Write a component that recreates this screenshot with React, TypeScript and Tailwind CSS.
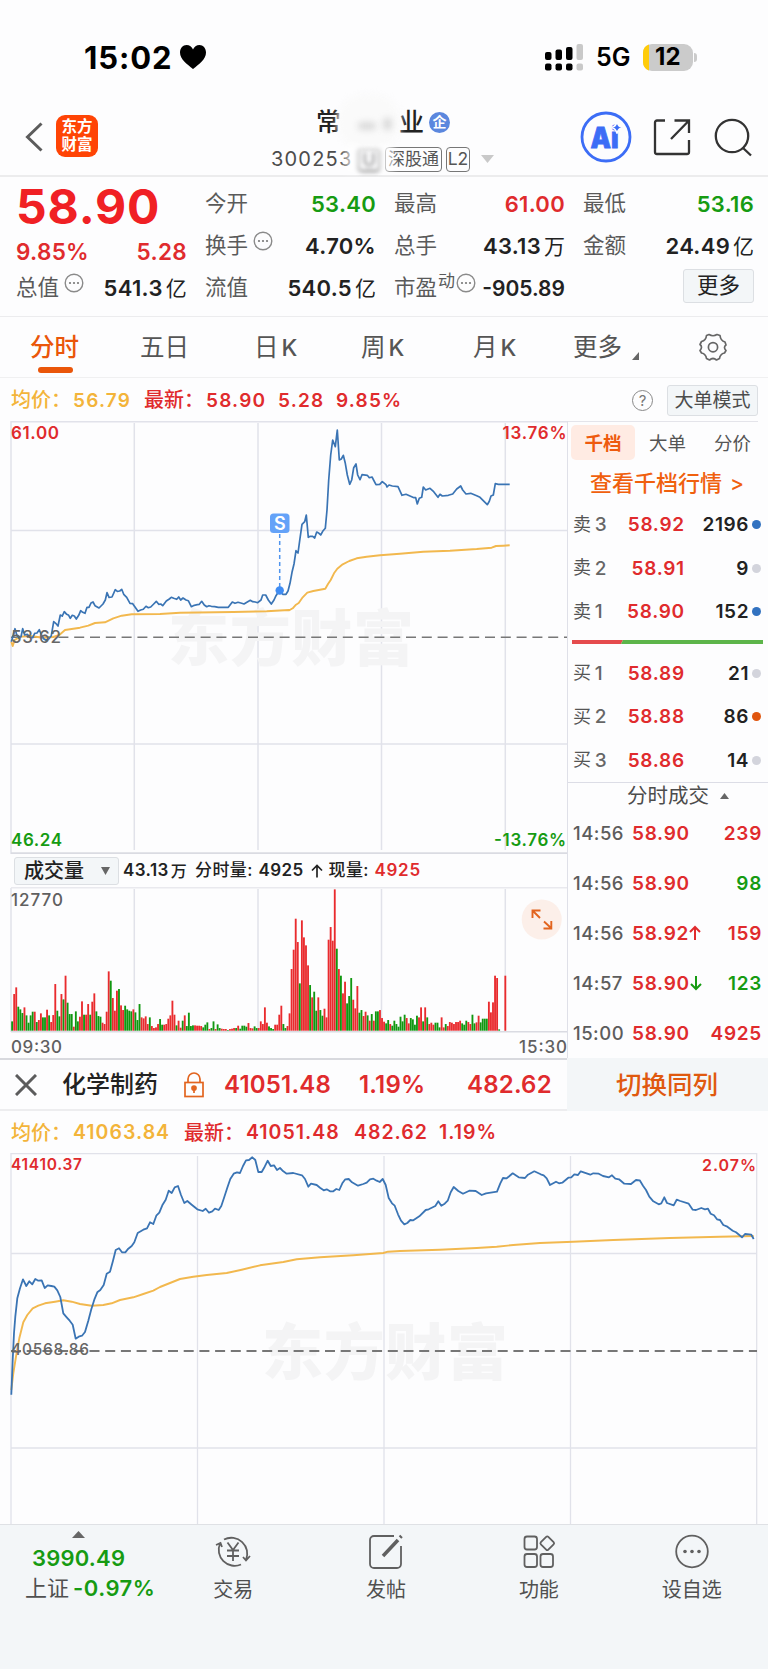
import React from "react";

const RED = "#e02b2d";
const GREEN = "#169b12";

/* ---------- chart data (in thirds of a pixel, relative to an origin) ---------- */
type Seg = { ox: number; oy: number; d: string };

const toPoints = (segs: Seg[]) =>
  segs
    .map(({ ox, oy, d }) =>
      d
        .trim()
        .split(/\s+/)
        .map((p) => {
          const [x, y] = p.split(",").map(Number);
          return `${(ox + x / 3).toFixed(1)},${(oy + y / 3).toFixed(1)}`;
        })
        .join(" ")
    )
    .join(" ");

const stockPrice = toPoints([
  {
    ox: 0,
    oy: 370,
    d: `34,815 40,795 45,776 51,797 57,805 63,800 68,776 74,795 82,793 90,801 98,803 104,790 111,789 118,779 124,794 131,806 138,811 146,807 154,797 161,755 167,760 174,768 181,735 187,738 193,725 200,733 206,736 211,745 217,736 223,738 229,747 236,736 242,722 248,727 255,730 261,712 267,712 273,699 279,696 285,707 297,714 309,702 316,690 321,668 327,682 336,681 346,659 352,664 359,663 365,658 371,673 380,682 390,700 398,701 407,714 414,724 422,720 430,718 438,709 445,713 452,711 461,702 469,694 476,703 482,702 488,707 499,693 508,687 514,682 521,685 530,688 536,681 542,690 549,684 558,690 565,692 574,710 583,706 592,704 598,703 605,694 613,705 620,710 627,707 634,709 644,710 655,712 685,712 697,696 705,700 714,697 725,700 732,702 742,696 751,691 758,695 766,696 773,698 783,690 788,675 797,675 805,690 814,702 822,690 828,677 833,669`,
  },
  {
    ox: 250,
    oy: 410,
    d: `88,541 98,553 108,553 114,543 120,520 126,487 132,462 138,422 144,429 150,385 156,343 164,335 169,315 175,382 181,379 188,379 194,384 200,366 207,370 212,375 218,364 226,355 231,300 236,210 242,135 248,90 256,110 262,60 268,150 274,147 280,136 286,160 292,195 299,223 305,210 311,173 318,162 323,195 330,209 336,194 352,196 358,203 366,201 378,224 389,223 397,215 408,224 411,231 417,225 427,228 444,230 456,256 468,253 480,258 492,263 497,263 502,282 508,265 515,262 520,231 527,240 540,235 551,245 564,262 570,253 577,258 595,256 608,252 620,237 632,228 638,240 648,252 662,250 680,257 690,262 702,274 712,284 718,274 723,258 730,255 736,221 745,223 779,223`,
  },
]);

const stockAvg = toPoints([
  {
    ox: 0,
    oy: 370,
    d: `34,815 38,828 44,810 60,800 90,798 130,803 160,801 178,795 195,780 240,773 265,767 285,759 315,757 340,745 365,737 395,733 480,732 540,728 700,726 800,724 866,720`,
  },
  {
    ox: 250,
    oy: 410,
    d: `118,601 128,595 138,584 146,579 158,562 172,548 190,543 226,536 234,522 242,510 252,490 262,476 278,463 298,453 320,445 350,440 390,436 450,431 520,425 600,422 680,417 725,413 738,408 760,407 779,406`,
  },
]);

const indexPrice = toPoints([
  {
    ox: 0,
    oy: 1050,
    d: `34,1034 38,930 42,850 46,800 52,745 60,715 69,688 79,708 88,694 97,703 106,687 115,692 125,691 134,714 143,706 154,708 163,710 172,721 181,741 190,790 200,802 209,812 218,824 227,866 236,860 246,857 255,846 265,812 274,778 283,749 292,727 301,720 311,705 320,671 330,665 339,632 347,600 357,595 366,607 376,607 385,596 395,588 403,577 413,549 430,539 441,535 450,517 460,522 469,497 478,488 487,466 497,449 506,422 515,429 524,412 534,408 543,435 553,459 562,453 575,464 592,478 608,483 617,476 627,488 637,484 645,476 656,480 664,468 673,441 682,413 691,387 701,371 711,367 720,369 729,348 738,331 747,330 757,322 766,330 775,366 785,366 794,350 803,332 812,348 822,346 831,360 840,354 850,364 860,371 880,369 906,376 915,387 925,410 933,401 950,405 960,413 971,421 980,418 990,424 1000,424 1009,417 1018,420 1027,400 1036,388 1046,387 1056,397 1074,407 1090,402 1100,398 1110,388 1120,386 1130,392 1139,396 1148,387`,
  },
  {
    ox: 380,
    oy: 1050,
    d: `17,405 26,444 36,460 44,467 54,493 63,512 73,523 82,519 91,510 100,511 118,499 137,480 146,478 166,468 175,454 184,467 194,461 203,452 212,427 221,411 235,423 249,431 268,422 287,423 305,435 318,430 351,425 361,400 369,384 380,385 398,370 416,382 435,384 444,374 463,364 482,373 491,376 500,385 510,405 528,395 537,400 547,398 565,383 574,382 583,373 594,375 602,364 631,374 640,370 656,371 669,378 687,382 696,376 706,386 717,388 733,401 753,402 768,390 779,391 789,407 798,420 808,440 820,454 836,463 844,460 853,442 861,459 881,466 890,449 901,453 926,461 938,479 948,480 964,474 975,478 984,476 992,491 1002,496 1011,508 1020,510 1030,525 1040,529 1058,542 1068,547 1086,562 1095,552 1114,554 1121,567`,
  },
]);

const indexAvg = toPoints([
  {
    ox: 0,
    oy: 1050,
    d: `34,1020 40,970 48,920 58,865 70,817 82,795 98,775 115,767 135,760 165,755 190,751 215,755 240,762 275,767 310,765 335,760 360,750 400,742 430,732 460,722 480,711 510,699 540,687 580,680 620,675 680,669 725,659 780,646 850,636 890,628 960,622 1060,616 1150,609`,
  },
  {
    ox: 380,
    oy: 1050,
    d: `24,605 60,603 180,599 290,594 350,590 400,585 480,579 580,575 700,570 870,564 1020,560 1121,558`,
  },
]);

const volume =
  "28g 110r 130r 72g 64g 53g 70r 46g 24g 46g 57g 57r 26g 32r 52r 40g 40g 63r 46g 26r 47r 140r 60g 43g 110r 94g 165r 84g 50g 50g 12r 58g 28g 42r 88r 48g 48r 80r 48g 87r 112r 58g 44g 42g 24r 20r 57r 178r 150g 98r 60r 120r 125g 76r 62r 75g 64g 60g 58g 64r 55g 32g 80g 40r 37r 43r 20r 40g 14r 8r 10r 20r 35g 18g 18r 20r 36r 46r 90r 48r 16g 30r 9r 30g 46r 14g 54g 14g 16g 16r 15r 15r 14r 10g 18g 25g 5r 8g 28g 5r 19g 8g 6r 5r 5r 2g 5r 6r 8r 8g 15r 6g 15g 15g 12g 23r 8r 7r 13g 8g 8r 28r 20r 70r 24r 13g 8g 5g 18r 18r 48r 75r 20g 8g 14r 52r 185r 243r 336r 266r 142g 331r 280r 256r 196r 137g 100r 117g 60g 100r 62g 45g 66r 40r 273r 311r 270r 424r 246g 185r 165g 112r 147r 82g 104g 158g 93r 67r 134r 54g 62g 44r 57r 46g 30r 50g 30r 58g 58g 62r 38r 27r 22g 32g 20r 15g 30g 20g 12g 42g 28g 48g 38r 22r 38g 34g 18g 45g 40r 70r 28g 70r 40g 20r 24r 18r 24g 24g 10g 40r 10r 20g 14r 26r 24r 20r 26r 26r 30r 22g 18g 30g 26r 20r 48g 22g 25r 45r 25g 36g 36g 36g 87r 55r 85r 165r 158r 4g 0g 0g 165r"
    .split(" ")
    .map((s) => ({ h: parseInt(s, 10) / 3, up: s.endsWith("r") }));

/* ---------- small pieces ---------- */
const Dots = ({ className = "" }: { className?: string }) => (
  <svg className={`h-[20px] w-[20px] shrink-0 ${className}`} viewBox="0 0 20 20">
    <circle cx="10" cy="10" r="8.8" fill="none" stroke="#8a8a8a" strokeWidth="1.4" />
    <circle cx="6" cy="10" r="1.1" fill="#777" />
    <circle cx="10" cy="10" r="1.1" fill="#777" />
    <circle cx="14" cy="10" r="1.1" fill="#777" />
  </svg>
);

const Cell = ({
  label,
  value,
  unit,
  tone = "text-[#222]",
  extra,
}: {
  label: string;
  value: string;
  unit?: string;
  tone?: string;
  extra?: React.ReactNode;
}) => (
  <div className="flex h-[42px] items-center">
    <span className="text-[21.5px] text-[#5a5a5a]">{label}</span>
    {extra}
    <span className={`ml-auto flex items-center text-[22px] font-[560] tracking-[0.3px] ${tone}`}>
      {value}
      {unit && <span className="ml-[3px] text-[21px] font-normal tracking-normal">{unit}</span>}
    </span>
  </div>
);

const BookRow = ({ side, n, price, qty, dot }: { side: string; n: string; price: string; qty: string; dot: string }) => (
  <div className="flex h-[43.7px] items-center pr-[7px] pl-[5px] text-[19px] font-[560]">
    <span className="w-[22px] text-[18px] font-normal text-[#555]">{side}</span>
    <span className="w-[16px] font-medium text-[#666]">{n}</span>
    <span className="w-[75px] text-right tracking-[0.7px] text-[#e02b2d]">{price}</span>
    <span className="w-[65px] text-right tracking-[0.6px] text-[#222]">{qty}</span>
    <span className={`ml-[3px] h-[9px] w-[9px] rounded-full ${dot}`} />
  </div>
);

const Trade = ({ t, price, qty, dir, tone }: { t: string; price: string; qty: string; dir?: "up" | "down"; tone: string }) => (
  <div className="flex h-[50px] items-center pr-[6px] pl-[5px] text-[19px] font-[560]">
    <span className="w-[59px] text-[18.5px] font-medium tracking-[0.5px] text-[#5c5c5c]">{t}</span>
    <span className="tracking-[0.7px] text-[#e02b2d]">{price}</span>
    {dir && (
      <svg className="h-[16px] w-[12px]" viewBox="0 0 12 16" fill="none" stroke={dir === "up" ? RED : GREEN} strokeWidth="2">
        {dir === "up" ? <path d="M6 15V2M1 7l5-5 5 5" /> : <path d="M6 1v13M1 9l5 5 5-5" />}
      </svg>
    )}
    <span className={`ml-auto tracking-[0.7px] ${tone}`}>{qty}</span>
  </div>
);

const Watermark = ({ x, y }: { x: number; y: number }) => (
  <text
    x={x}
    y={y}
    fontSize="61"
    fontWeight="900"
    textLength="246"
    fill="#f4f4f5"
  >
    东方财富
  </text>
);

const NavItem = ({ label, children }: { label: string; children: React.ReactNode }) => (
  <div className="flex w-[152.8px] flex-col items-center pt-[8px]">
    <svg className="h-[36px] w-[40px]" viewBox="0 0 40 36" fill="none" stroke="#606060" strokeWidth="1.8">
      {children}
    </svg>
    <span className="mt-[11px] text-[20px] text-[#505050]">{label}</span>
  </div>
);

/* ---------- page ---------- */
export default function App() {
  return (
    <div
      className="flex h-[1669px] w-[768px] flex-col overflow-hidden bg-[#fdfdfe] leading-none whitespace-nowrap text-[#222]"
      style={{ fontFamily: 'Inter, "Noto Sans CJK SC", sans-serif' }}
    >
      {/* status bar */}
      <div className="flex h-[98px] shrink-0 items-center pt-[16px] pl-[84px]">
        <span className="w-[95px] text-[31px] font-bold tracking-[0.9px] text-black">15:02</span>
        <svg className="h-[26px] w-[28px]" viewBox="0 0 28 26">
          <path d="M14 25C8 20 1 15.500 1 8.500C1 4 4 1 7.500 1C10.500 1 13 3 14 5.500C15 3 17.500 1 20.500 1C24 1 27 4 27 8.500C27 15.500 20 20 14 25Z" fill="#000" />
        </svg>
        <svg className="ml-[338px] h-[28px] w-[40px]" viewBox="0 0 40 28">
          <g fill="#000">
            <rect x="0" y="9" width="6.500" height="8" rx="2" />
            <rect x="10.500" y="6.500" width="6.500" height="10.500" rx="2" />
            <rect x="21" y="4" width="6.500" height="13" rx="2" />
            <rect x="0" y="20.500" width="6.500" height="7" rx="2" />
            <rect x="10.500" y="20.500" width="6.500" height="7" rx="2" />
            <rect x="21" y="20.500" width="6.500" height="7" rx="2" />
          </g>
          <g fill="#c9c9c9">
            <rect x="31.500" y="1" width="6.500" height="16" rx="2" />
            <rect x="31.500" y="20.500" width="6.500" height="7" rx="2" />
          </g>
        </svg>
        <span className="ml-[11px] w-[47px] text-[25px] font-semibold text-black">5G</span>
        <div className="flex h-[27px] w-[50px] items-center rounded-[9px] bg-[#cbcbcb]">
          <svg className="h-[27px] w-[6px] shrink-0" viewBox="0 0 6 27">
            <path d="M6 .4A9 9 0 0 0 0 9v9a9 9 0 0 0 6 8.600z" fill="#ffcc0a" />
          </svg>
          <span className="w-[38px] text-center text-[24px] font-bold tracking-[0.3px] text-black">12</span>
        </div>
        <span className="ml-[1px] h-[9px] w-[3px] rounded-r-full bg-[#cbcbcb]" />
      </div>

      {/* title bar */}
      <div className="flex h-[79px] shrink-0 border-b-2 border-[#ececed]">
        <svg className="mt-[24px] ml-[24px] h-[30px] w-[20px]" viewBox="0 0 20 30" fill="none" stroke="#5c5c5c" strokeWidth="3">
          <path d="M17.500 1.500L3.500 15l14 13.500" />
        </svg>
        <div className="mt-[17px] ml-[12px] flex h-[42px] w-[42px] flex-col items-center justify-center rounded-[9px] bg-[#ff4405] text-[15.5px] leading-[18px] font-bold text-white">
          <span>东方</span>
          <span>财富</span>
        </div>
        <div className="relative ml-[163px] w-[245px]">
          <div className="mt-[10px] flex h-[28px] items-center pl-[55px] text-[25px] font-medium">
            <span>常</span>
            <span className="ml-[58px]">业</span>
            <span className="ml-[5px] flex h-[21px] w-[21px] items-center justify-center rounded-full bg-[#5b87de] text-[14px] font-bold text-white">企</span>
          </div>
          <div className="mt-[10px] flex h-[26px] items-center pl-[10px]">
            <span className="w-[86px] text-[20px] tracking-[1.200px] text-[#4c4c4c]">300253</span>
            <span className="flex h-[25px] w-[24px] items-center justify-center rounded-[5px] border-2 border-[#777] text-[19px] text-[#777] blur-[2px]">U</span>
            <span className="ml-[4px] flex h-[25px] w-[57px] items-center justify-center rounded-[4px] border border-[#777] text-[17px] text-[#555]">深股通</span>
            <span className="ml-[4px] flex h-[25px] w-[24px] items-center justify-center rounded-[4px] border border-[#777] text-[17.500px] text-[#555]">L2</span>
            <svg className="ml-[11px] h-[8px] w-[13px] shrink-0" viewBox="0 0 13 8">
              <path d="M0 0h13L6.500 8z" fill="#c9c9c9" />
            </svg>
          </div>
          <div className="absolute top-[-4px] left-[76px] h-[56px] w-[64px] rounded-full bg-[#fafafa] blur-[3px]" />
          <div className="absolute top-[24px] left-[97px] h-[8px] w-[18px] rounded bg-[#dadada] blur-[3px]" />
          <div className="absolute top-[20px] left-[122px] h-[12px] w-[9px] rounded bg-[#dadada] blur-[3px]" />
          <div className="absolute top-[46px] left-[84px] h-[28px] w-[15px] bg-white/70 blur-[4px]" />
          <div className="absolute top-[46px] left-[117px] h-[28px] w-[16px] bg-white/60 blur-[3px]" />
        </div>
        <div className="mt-[13px] ml-[74px] flex h-[52px] items-center">
          <svg className="h-[52px] w-[52px]" viewBox="0 0 52 52">
            <circle cx="26" cy="26" r="24" fill="none" stroke="#3c6df6" strokeWidth="2.800" />
            <text x="10.500" y="36.500" fontSize="28" fontWeight="900" fill="#3c6df6" stroke="#3c6df6" strokeWidth=".8" textLength="28" lengthAdjust="spacingAndGlyphs">Ai</text>
            <path d="M37 10.500q1 5 5.500 6q-4.500 1-5.500 6q-1-5-5.500-6q4.500-1 5.500-6z" fill="#3c6df6" stroke="#fdfdfe" strokeWidth="1.600" />
          </svg>
          <svg className="ml-[20px] h-[40px] w-[40px]" viewBox="0 0 40 40" fill="none" stroke="#333" strokeWidth="2.300">
            <path d="M13 3.500H5a2 2 0 0 0-2 2V35a2 2 0 0 0 2 2h30a2 2 0 0 0 2-2V23M22.500 3.500H37V16M37 3.500L19 22" />
          </svg>
          <svg className="ml-[21px] h-[40px] w-[40px]" viewBox="0 0 40 40" fill="none" stroke="#333" strokeWidth="2.300">
            <circle cx="19" cy="19" r="16.200" />
            <path d="M29.500 30.500L38 38.500" />
          </svg>
        </div>
      </div>

      {/* quote */}
      <div className="flex h-[140px] shrink-0 gap-[18px] border-b border-[#ececee] pt-[6px] pl-[16px]">
        <div className="w-[171px]">
          <div className="flex h-[48px] items-center text-[48px] font-bold tracking-[0.9px] text-[#f02024]">58.90</div>
          <div className="flex h-[43px] items-center justify-between text-[22.500px] font-[560] tracking-[0.3px] text-[#e02b2d]">
            <span>9.85%</span>
            <span>5.28</span>
          </div>
          <div className="flex h-[28px] items-center">
            <span className="text-[21.500px] text-[#5a5a5a]">总值</span>
            <Dots className="mb-[10px] ml-[5px]" />
            <span className="ml-auto flex items-center text-[22px] font-[560] tracking-[0.3px]">
              541.3<span className="ml-[3px] text-[21px] font-normal">亿</span>
            </span>
          </div>
        </div>
        <div className="w-[171px]">
          <Cell label="今开" value="53.40" tone="text-[#169b12]" />
          <Cell label="换手" value="4.70%" extra={<Dots className="mb-[10px] ml-[5px]" />} />
          <Cell label="流值" value="540.5" unit="亿" />
        </div>
        <div className="w-[171px]">
          <Cell label="最高" value="61.00" tone="text-[#e02b2d]" />
          <Cell label="总手" value="43.13" unit="万" />
          <div className="flex h-[42px] items-center">
            <span className="text-[21.5px] text-[#5a5a5a]">市盈</span>
            <span className="mb-[13px] ml-[1px] text-[17px] text-[#5a5a5a]">动</span>
            <Dots className="mb-[10px] ml-[1px]" />
            <span className="ml-auto text-[21px] font-[560]">-905.89</span>
          </div>
        </div>
        <div className="w-[171px]">
          <Cell label="最低" value="53.16" tone="text-[#169b12]" />
          <Cell label="金额" value="24.49" unit="亿" />
          <div className="mt-[2px] ml-auto flex h-[34px] w-[71px] items-center justify-center rounded-[3px] border border-[#dcdfe3] bg-[#f3f6f8] text-[21.500px]">更多</div>
        </div>
      </div>

      {/* period tabs */}
      <div className="flex h-[61px] shrink-0 border-b border-[#f0f0f1] pt-[15px] text-[24.500px] text-[#555]">
        <div className="ml-[30px] flex w-[110px] flex-col">
          <span className="h-[30px] leading-[30px] font-medium text-[#ea560a]">分时</span>
          <span className="mt-[5px] ml-[8px] h-[6px] w-[35px] rounded-full bg-[#ea560a]" />
        </div>
        <span className="w-[114px] leading-[30px]">五日</span>
        <span className="w-[107px] leading-[30px]">日<span className="ml-[3px] text-[23px] font-medium">K</span></span>
        <span className="w-[112px] leading-[30px]">周<span className="ml-[3px] text-[23px] font-medium">K</span></span>
        <span className="w-[100px] leading-[30px]">月<span className="ml-[3px] text-[23px] font-medium">K</span></span>
        <span className="leading-[30px]">更多</span>
        <svg className="mt-[20px] ml-[10px] h-[8px] w-[7px]" viewBox="0 0 7 8">
          <path d="M7 0v8H0z" fill="#666" />
        </svg>
        <svg className="ml-[59px] h-[30px] w-[30px]" viewBox="0 0 30 30" fill="none" stroke="#666" strokeWidth="1.700" strokeLinejoin="round">
          <path d="M11 2.500Q15 5 19 2.500L22 3.500Q22.500 8.500 27 10L28 13Q25 15 28 18.500L26.500 21Q22 22 21.500 26.500L18.500 28Q15 25 11.500 28L8.500 26.500Q8 22 3.500 21L2 18.500Q5 15 2 12.500L3.500 9.500Q8 8.500 8.500 3.500Z" />
          <circle cx="15" cy="15.200" r="4.600" />
        </svg>
      </div>

      {/* stock legend */}
      <div className="flex h-[43px] shrink-0 items-center pt-[1px] pl-[11px] text-[19px] font-semibold tracking-[1.200px] text-[#e02b2d]">
        <span className="w-[62px] text-[20px] font-medium tracking-normal text-[#f3b43a]">均价：</span>
        <span className="w-[71px] text-[#f3b43a]">56.79</span>
        <span className="w-[62px] text-[20px] font-medium tracking-normal">最新：</span>
        <span className="w-[72px]">58.90</span>
        <span className="w-[58px]">5.28</span>
        <span>9.85%</span>
        <span className="ml-auto flex h-[21px] w-[21px] items-center justify-center rounded-full border-[1.500px] border-[#888] text-[15px] font-normal tracking-normal text-[#777]">?</span>
        <span className="mr-[10px] ml-[14px] flex h-[31px] w-[91px] items-center justify-center rounded-[3px] border border-[#dcdfe3] bg-[#f3f6f8] text-[19px] font-normal tracking-normal text-[#4c4c4c]">大单模式</span>
      </div>

      {/* stock chart and order book */}
      <div className="flex h-[637px] shrink-0">
        <div className="flex w-[567px] flex-col">
          <svg className="h-[433px] w-[567px] shrink-0" viewBox="0 421 567 433">
            <g stroke="#e1e2ea" strokeWidth="1.500">
              <path d="M11 421V854M134.300 423V850M258 423V850M381.500 423V850M505.300 423V850M11 421.700H567M11 530.500H567M11 744H567" fill="none" />
              <path d="M11 853.200H567" stroke="#dadbe2" strokeWidth="2" />
            </g>
            <Watermark x={168} y={661} />
            <path d="M11 637.200H567" stroke="#777" strokeWidth="1.600" strokeDasharray="10 5.800" />
            <polyline points={stockAvg} fill="none" stroke="#f2b84e" strokeWidth="1.900" strokeLinejoin="round" />
            <polyline points={stockPrice} fill="none" stroke="#3a74b4" strokeWidth="1.700" strokeLinejoin="round" />
            <path d="M279.700 534V588" stroke="#4f94ee" strokeWidth="1.500" strokeDasharray="4 3" />
            <circle cx="279.700" cy="590.500" r="4.200" fill="#3f8cf3" />
            <rect x="270" y="513.500" width="19.500" height="19.500" rx="3.500" fill="#64a2f8" />
            <text x="279.800" y="529.800" fontSize="18" fontWeight="600" fill="#fff" textAnchor="middle">S</text>
            <g fontSize="17" fontWeight="600">
              <text x="11" y="438.800" fill={RED} textLength="48">61.00</text>
              <text x="502.500" y="438.800" fill={RED} textLength="64">13.76%</text>
              <text x="11" y="642.500" fill="#666" fontWeight="500" textLength="50">53.62</text>
              <text x="11" y="846" fill={GREEN} textLength="51">46.24</text>
              <text x="494" y="846" fill={GREEN} textLength="72">-13.76%</text>
            </g>
          </svg>
          <div className="flex h-[33px] shrink-0 items-center pl-[14px] text-[17px] font-[560] tracking-[0.400px]">
            <span className="flex h-[28px] w-[105px] items-center rounded-[3px] border border-[#dcdfe3] bg-[#f3f6f8] pl-[9px] text-[20px] font-medium tracking-normal">
              成交量
              <svg className="ml-[17px] h-[8px] w-[9px]" viewBox="0 0 9 8">
                <path d="M0 0h9L4.500 8z" fill="#666" />
              </svg>
            </span>
            <span className="ml-[4px] flex w-[72px] items-center">
              43.13<span className="ml-[2px] text-[16px] font-medium">万</span>
            </span>
            <span className="w-[63.500px] font-medium">分时量:</span>
            <span className="w-[52px]">4925</span>
            <svg className="mr-[6px] h-[14px] w-[12px]" viewBox="0 0 12 14" fill="none" stroke="#222" strokeWidth="1.700">
              <path d="M6 13.500V1.500M1 6.500l5-5 5 5" />
            </svg>
            <span className="w-[46px] font-medium">现量:</span>
            <span className="tracking-[0.700px] text-[#e02b2d]">4925</span>
          </div>
          <svg className="h-[171px] w-[567px] shrink-0" viewBox="0 887 567 171">
            <path d="M11 888V1032M134.300 889V1031M258 889V1031M381.500 889V1031M505.300 889V1031" fill="none" stroke="#e1e2ea" strokeWidth="1.500" />
            <path d="M11 887.700H567" stroke="#e9e9ee" strokeWidth="1.500" />
            {volume.map((v, i) => (
              <rect key={i} x={11.2 + i * 2.055} y={1030.7 - v.h} width="1.850" height={v.h} fill={v.up ? "#e92b2e" : "#109710"} />
            ))}
            <path d="M11 1031.800H567" stroke="#dadbe2" strokeWidth="1.500" />
            <circle cx="541.700" cy="919.500" r="20" fill="#fcefe9" />
            <path d="M532.500 918V910.500H540.500M533 911L540 918M551.300 921V928.500H543.500M551 928L544 921.500" fill="none" stroke="#e2641f" strokeWidth="1.900" />
            <g fontSize="17" fontWeight="500" fill="#606060">
              <text x="11" y="906" textLength="52">12770</text>
              <text x="11" y="1052.500" textLength="51">09:30</text>
              <text x="519" y="1052.500" textLength="48">15:30</text>
            </g>
          </svg>
        </div>

        <div className="flex w-[201px] flex-col border-l border-[#dfe0e8]">
          <div className="mr-[10px] flex h-[43px] items-center border-t border-[#e4e4ea] pl-[3px] text-[18.500px] text-[#555]">
            <span className="flex h-[35px] w-[64px] items-center justify-center rounded-[5px] bg-[#ffebe3] font-bold text-[#ee5a0e]">千档</span>
            <span className="ml-[14px]">大单</span>
            <span className="ml-[28px]">分价</span>
          </div>
          <div className="flex h-[39px] items-center pl-[22px] text-[22px] font-medium text-[#f0600e]">
            查看千档行情<span className="ml-[8px] text-[21px]">&gt;</span>
          </div>
          <BookRow side="卖" n="3" price="58.92" qty="2196" dot="bg-[#3272c0]" />
          <BookRow side="卖" n="2" price="58.91" qty="9" dot="bg-[#d3d4dc]" />
          <BookRow side="卖" n="1" price="58.90" qty="152" dot="bg-[#3272c0]" />
          <svg className="my-[7px] ml-[4px] h-[4px] w-[191px] shrink-0" viewBox="0 0 191 4">
            <path d="M0 0H51L49 4H0z" fill="#e54b4d" />
            <path d="M51 0H191V4H49z" fill="#5db54a" />
          </svg>
          <BookRow side="买" n="1" price="58.89" qty="21" dot="bg-[#d3d4dc]" />
          <BookRow side="买" n="2" price="58.88" qty="86" dot="bg-[#e0560f]" />
          <BookRow side="买" n="3" price="58.86" qty="14" dot="bg-[#d3d4dc]" />
          <div className="flex h-[26.500px] shrink-0 items-center border-t border-[#dcdde6] pl-[59px] text-[20.500px] text-[#4c4c4c]">
            分时成交
            <svg className="ml-[11px] h-[6px] w-[9px]" viewBox="0 0 9 6">
              <path d="M0 6h9L4.500 0z" fill="#666" />
            </svg>
          </div>
          <Trade t="14:56" price="58.90" qty="239" tone="text-[#e02b2d]" />
          <Trade t="14:56" price="58.90" qty="98" tone="text-[#169b12]" />
          <Trade t="14:56" price="58.92" qty="159" dir="up" tone="text-[#e02b2d]" />
          <Trade t="14:57" price="58.90" qty="123" dir="down" tone="text-[#169b12]" />
          <Trade t="15:00" price="58.90" qty="4925" tone="text-[#e02b2d]" />
        </div>
      </div>

      {/* sector bar */}
      <div className="flex h-[53px] shrink-0">
        <div className="flex w-[567px] items-center border-t-2 border-b-2 border-t-[#d8d9de] border-b-[#ededef] pl-[15px] text-[24px] font-[560] tracking-[0.200px] text-[#e02b2d]">
          <svg className="h-[22px] w-[22px]" viewBox="0 0 22 22" stroke="#5c5c5c" strokeWidth="3">
            <path d="M1 1l20 20M21 1L1 21" />
          </svg>
          <span className="ml-[25px] w-[122px] text-[24px] font-medium tracking-normal text-[#222]">化学制药</span>
          <svg className="h-[26px] w-[20px]" viewBox="0 0 20 26" fill="none" stroke="#e2641f" strokeWidth="1.700">
            <rect x="1" y="10.500" width="18" height="14" />
            <path d="M4 10V7a6 6 0 0 1 12 0v3" />
            <circle cx="10" cy="16" r="2" fill="#e2641f" />
            <path d="M10 16v5" />
          </svg>
          <span className="ml-[20px] w-[135px]">41051.48</span>
          <span className="w-[108px]">1.19%</span>
          <span>482.62</span>
        </div>
        <div className="flex flex-1 items-center justify-center bg-[#f3f6f8] pr-[1px] text-[25.500px] font-medium text-[#e0590f]">切换同列</div>
      </div>

      {/* sector legend */}
      <div className="flex h-[42px] shrink-0 items-center pl-[11px] pt-[2px] text-[19.500px] font-semibold tracking-[1px] text-[#e02b2d]">
        <span className="w-[62px] text-[20px] font-medium tracking-normal text-[#f3b43a]">均价：</span>
        <span className="w-[111px] text-[#f3b43a]">41063.84</span>
        <span className="w-[62px] text-[20px] font-medium tracking-normal">最新：</span>
        <span className="w-[108px]">41051.48</span>
        <span className="w-[85px]">482.62</span>
        <span>1.19%</span>
      </div>

      {/* sector chart */}
      <svg className="h-[371px] w-[768px] shrink-0" viewBox="0 1153 768 371">
        <path d="M11 1153V1524M197.500 1156V1524M384 1156V1524M570.500 1156V1524M756.700 1153V1524M11 1153.500H757M11 1253.500H757M11 1448H757" fill="none" stroke="#e1e2ea" strokeWidth="1.300" />
        <Watermark x={262} y={1375} />
        <path d="M11 1351H757" stroke="#777" strokeWidth="1.900" strokeDasharray="10 5.700" />
        <polyline points={indexAvg} fill="none" stroke="#f2b84e" strokeWidth="1.900" strokeLinejoin="round" />
        <polyline points={indexPrice} fill="none" stroke="#3a74b4" strokeWidth="1.800" strokeLinejoin="round" />
        <g fontSize="15.500" fontWeight="600">
          <text x="11" y="1169.800" fill={RED} textLength="71">41410.37</text>
          <text x="702" y="1170.500" fontSize="16" fill={RED} textLength="54">2.07%</text>
          <text x="11" y="1355" fill="#666" fontWeight="500" textLength="78">40568.86</text>
        </g>
      </svg>

      {/* bottom bar */}
      <div className="flex h-[145px] shrink-0 border-t border-[#dfe1e5] bg-[#f3f6f8]">
        <div className="flex w-[157px] flex-col pt-[6px]">
          <svg className="ml-[72px] h-[7px] w-[13px]" viewBox="0 0 13 7">
            <path d="M0 7h13L6.500 0z" fill="#666" />
          </svg>
          <span className="mt-[9px] ml-[32px] text-[22px] font-[560] tracking-[0.200px] text-[#169b12]">3990.49</span>
          <span className="mt-[8px] ml-[25px] flex items-center text-[22px] font-[560] tracking-[0.500px] text-[#169b12]">
            <span className="w-[48px] text-[22px] font-normal tracking-normal text-[#505050]">上证</span>-0.97%
          </span>
        </div>
        <NavItem label="交易">
          <path d="M11 6.500A16 16 0 0 1 33 27M28 31.500A16 16 0 0 1 7 10.500M3 12l4.500-2L9 14M37 23l-4 4.500L30 24" />
          <path d="M14.500 9.500L20 17l5.500-7.500M20 17v11M14 17.500h12M14 23h12" />
        </NavItem>
        <NavItem label="发帖">
          <path d="M28 3H8a4 4 0 0 0-4 4V31a4 4 0 0 0 4 4H31a4 4 0 0 0 4-4V13" />
          <path d="M32 7L17 23M34 4.500l1.500-1.500" strokeWidth="3.500" />
        </NavItem>
        <NavItem label="功能">
          <rect x="5.500" y="3.500" width="12.500" height="13" rx="2.500" />
          <rect x="5.500" y="21" width="12.500" height="13" rx="2.500" />
          <rect x="21.500" y="21" width="12.500" height="13" rx="2.500" />
          <rect x="23" y="5" width="10.500" height="10.500" rx="1.500" transform="rotate(45 28.250 10.250)" />
        </NavItem>
        <NavItem label="设自选">
          <circle cx="20" cy="18.500" r="15.800" />
          <g fill="#606060" stroke="none">
            <circle cx="13" cy="18.500" r="1.800" />
            <circle cx="20" cy="18.500" r="1.800" />
            <circle cx="27" cy="18.500" r="1.800" />
          </g>
        </NavItem>
      </div>
    </div>
  );
}
